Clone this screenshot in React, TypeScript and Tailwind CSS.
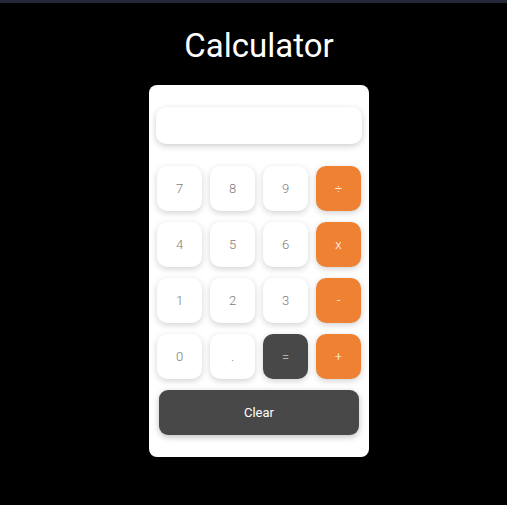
import React from "react";

const keys: { label: string; kind: "num" | "op" | "eq" }[] = [
  { label: "7", kind: "num" },
  { label: "8", kind: "num" },
  { label: "9", kind: "num" },
  { label: "÷", kind: "op" },
  { label: "4", kind: "num" },
  { label: "5", kind: "num" },
  { label: "6", kind: "num" },
  { label: "x", kind: "op" },
  { label: "1", kind: "num" },
  { label: "2", kind: "num" },
  { label: "3", kind: "num" },
  { label: "-", kind: "op" },
  { label: "0", kind: "num" },
  { label: ".", kind: "num" },
  { label: "=", kind: "eq" },
  { label: "+", kind: "op" },
];

export default function App() {
  return (
    <div className="min-h-[505px] bg-black flex flex-col items-center" style={{ fontFamily: "Roboto, 'Noto Sans', sans-serif" }}>
      <div className="w-full h-[3px] bg-[#232838]" />
      <div className="pl-[11px] flex flex-col items-center">
        <h1 className="text-white text-[33px] leading-[40px] mt-[23px] font-normal">Calculator</h1>
        <div className="mt-[19px] w-[220px] bg-white rounded-[8px] px-[7px] pt-[22px] pb-[22px] flex flex-col">
          <div className="h-[37px] w-[206px] rounded-[10px] bg-white shadow-[0_2px_6px_rgba(0,0,0,0.2)]" />
          <div className="mt-[22px] px-[1px] grid grid-cols-[45px_45px_45px_45px] gap-x-[8px] gap-y-[11px]">
            {keys.map((k) => (
              <button
                key={k.label}
                className={
                  k.kind === "num"
                    ? "h-[45px] w-[45px] rounded-[10px] bg-white text-[#7c7c7c] text-[13px] font-light shadow-[0_2px_6px_rgba(0,0,0,0.18)] flex items-center justify-center"
                    : k.kind === "op"
                    ? "h-[45px] w-[45px] rounded-[10px] bg-[#ee8232] text-white text-[13px] font-light shadow-[0_2px_6px_rgba(0,0,0,0.18)] flex items-center justify-center"
                    : "h-[45px] w-[45px] rounded-[10px] bg-[#484848] text-white text-[13px] font-light shadow-[0_2px_6px_rgba(0,0,0,0.18)] flex items-center justify-center"
                }
              >
                {k.label}
              </button>
            ))}
          </div>
          <button className="mt-[11px] mx-[3px] h-[45px] w-[200px] rounded-[9px] bg-[#484848] text-white text-[13px] font-normal shadow-[0_2px_6px_rgba(0,0,0,0.25)]">
            Clear
          </button>
        </div>
      </div>
    </div>
  );
}
